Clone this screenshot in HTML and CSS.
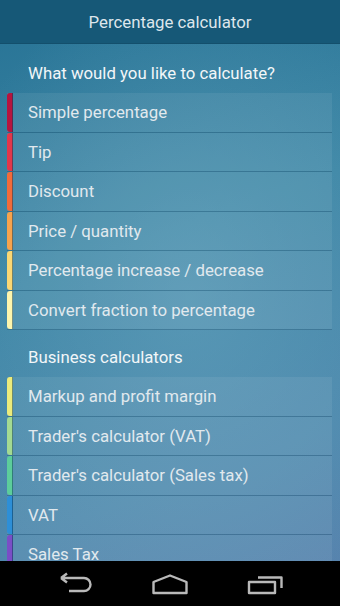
FILE: index.html
```html
<!DOCTYPE html>
<html lang="en">
<head>
    <meta charset="UTF-8">
    <meta name="viewport" content="width=device-width, initial-scale=1.0">
    <title>Percentage calculator</title>
    <link rel="stylesheet" href="styles.css">
</head>
<body>
    <div class="screen">
        <div class="app-bar">Percentage calculator</div>

        <div class="content">
            <div class="section-title">What would you like to calculate?</div>
            <ul class="menu">
                <li class="menu-item c-crimson">Simple percentage</li>
                <li class="menu-item c-red">Tip</li>
                <li class="menu-item c-orange">Discount</li>
                <li class="menu-item c-amber">Price / quantity</li>
                <li class="menu-item c-yellow">Percentage increase / decrease</li>
                <li class="menu-item c-cream">Convert fraction to percentage</li>
            </ul>

            <div class="section-title second">Business calculators</div>
            <ul class="menu">
                <li class="menu-item c-lime">Markup and profit margin</li>
                <li class="menu-item c-green">Trader's calculator (VAT)</li>
                <li class="menu-item c-teal">Trader's calculator (Sales tax)</li>
                <li class="menu-item c-blue">VAT</li>
                <li class="menu-item c-purple">Sales Tax</li>
            </ul>
        </div>

        <div class="nav-bar">
            <svg width="340" height="45" viewBox="0 561 340 45">
                <g fill="none" stroke="#b9b9b9" stroke-width="2.4" stroke-linejoin="round">
                    <path d="M61 578 L67 573.5 M61 578 L67 582.5 M61 578 H84 A6.5 6.5 0 0 1 84 591 H69"/>
                    <path d="M153.5 582 L170 575.5 L186.5 582 V593 H153.5 Z"/>
                    <rect x="249" y="582" width="26" height="11"/>
                    <path d="M258 577.5 H281.5 V588"/>
                </g>
            </svg>
        </div>
    </div>
</body>
</html>
```

FILE: styles.css
```css
body {
    margin: 0;
    font-family: Roboto, "Noto Sans", sans-serif;
    color: #e9f0f4;
}

.screen {
    width: 340px;
    height: 606px;
    overflow: hidden;
    display: flex;
    flex-direction: column;
    background:
        radial-gradient(ellipse 260px 320px at 190px 300px, rgba(110, 170, 195, 0.45), rgba(110, 170, 195, 0) 100%),
        linear-gradient(160deg, #277395 0%, #3d86a5 40%, #4e88ad 75%, #5a82ae 100%);
}

.app-bar {
    height: 44px;
    flex-shrink: 0;
    display: flex;
    align-items: center;
    justify-content: center;
    background: #165877;
    border-bottom: 1px solid #134f6c;
    box-sizing: border-box;
    font-size: 16.8px;
    color: #dde6ec;
}

.content {
    flex: 1;
    overflow: hidden;
}

.section-title {
    padding: 19px 0 10px 28px;
    line-height: 20px;
    font-size: 16.8px;
    color: #f2f6f8;
}

.section-title.second {
    padding-top: 18px;
}

.menu {
    list-style: none;
    margin: 0;
    padding: 0 8px 0 7px;
    display: flex;
    flex-direction: column;
    gap: 1px;
}

.menu-item {
    height: 38.5px;
    display: flex;
    align-items: center;
    padding-left: 21px;
    position: relative;
    background: rgba(255, 255, 255, 0.07);
    box-shadow: 0 1px 0 rgba(10, 50, 80, 0.25);
    font-size: 16.8px;
    color: #e1e9ee;
}

.menu-item::before {
    content: "";
    position: absolute;
    left: 0;
    top: 0;
    bottom: 0;
    width: 5px;
    border-radius: 3px 0 0 3px;
    border-right: 1px solid rgba(15, 60, 90, 0.55);
    background: var(--strip);
}

.c-crimson { --strip: #b5153f; }
.c-red { --strip: #e1374b; }
.c-orange { --strip: #f16b3a; }
.c-amber { --strip: #f6a34d; }
.c-yellow { --strip: #fad774; }
.c-cream { --strip: #fdf5ad; }
.c-lime { --strip: #ebeb7c; }
.c-green { --strip: #a3da92; }
.c-teal { --strip: #5ccd9b; }
.c-blue { --strip: #2d8fd7; }
.c-purple { --strip: #7a4ec6; }

.nav-bar {
    height: 45px;
    flex-shrink: 0;
    background: #000;
}

.nav-bar svg {
    display: block;
}
```
